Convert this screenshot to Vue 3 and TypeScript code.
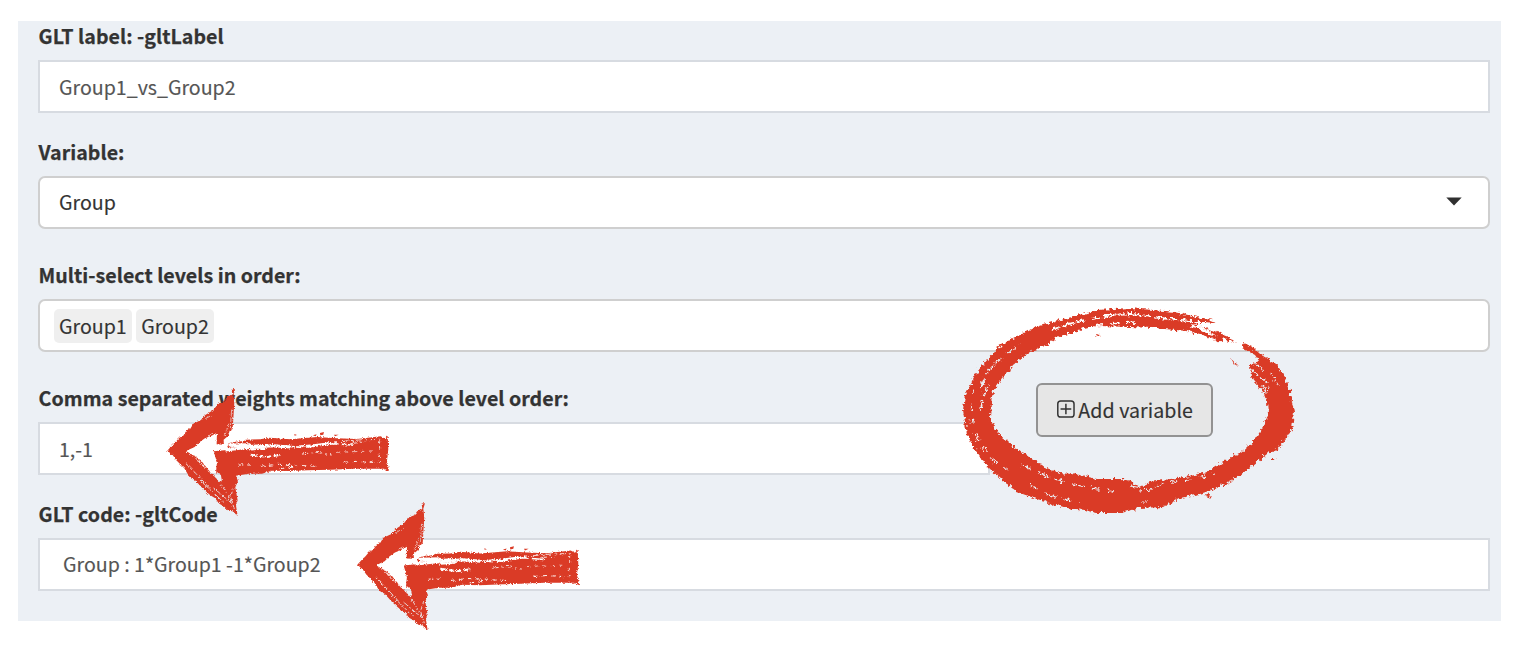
<script setup lang="ts">
import { ref } from 'vue'

const gltLabel = ref('Group1_vs_Group2')
const variable = ref('Group')
const levels = ref<string[]>(['Group1', 'Group2'])
const weights = ref('1,-1')
const gltCode = ref('Group : 1*Group1 -1*Group2')

const arrows = [
  { id: 'weights', at: 'translate(150.3 380.3) scale(.33333)' },
  { id: 'code', at: 'translate(340.3 494.5) scale(.33333)' },
]
</script>

<template>
  <main class="page">
    <section class="panel">
      <div class="field">
        <label class="label">GLT label: -gltLabel</label>
        <div class="control text"><span>{{ gltLabel }}</span></div>
      </div>
      <div class="field select-field">
        <label class="label">Variable:</label>
        <div class="control select">
          <span>{{ variable }}</span>
          <svg class="caret" width="16" height="9" viewBox="0 0 16 9"><path d="M.3.5H15.7L8 8.6Z" fill="#303030" /></svg>
        </div>
      </div>
      <div class="field select-field">
        <label class="label">Multi-select levels in order:</label>
        <div class="control select multi">
          <span v-for="level in levels" :key="level" class="tag"><span>{{ level }}</span></span>
        </div>
      </div>
      <div class="row">
        <div class="field weights">
          <label class="label">Comma separated weights matching above level order:</label>
          <div class="control text"><span>{{ weights }}</span></div>
        </div>
        <button class="add" type="button">
          <svg width="18" height="18" viewBox="0 0 18 18" fill="none" stroke="#333" stroke-width="1.5">
            <rect x=".8" y=".8" width="16.4" height="16.4" rx="3" />
            <path d="M9 3.6V14.4M3.6 9H14.4" />
          </svg>
          <span>Add variable</span>
        </button>
      </div>
      <div class="field">
        <label class="label">GLT code: -gltCode</label>
        <div class="control text code"><span>{{ gltCode }}</span></div>
      </div>
    </section>

    <svg class="marks" width="1514" height="648" viewBox="0 0 1514 648">
      <defs>
        <filter id="rough" x="-10%" y="-10%" width="120%" height="120%">
          <feTurbulence type="fractalNoise" baseFrequency=".5" numOctaves="3" seed="8" />
          <feDisplacementMap in="SourceGraphic" scale="10" xChannelSelector="R" yChannelSelector="G" />
        </filter>
        <filter id="bristle" x="-10%" y="-10%" width="120%" height="120%">
          <feTurbulence type="fractalNoise" baseFrequency=".25 .4" numOctaves="3" seed="4" />
          <feDisplacementMap in="SourceGraphic" scale="11" xChannelSelector="R" yChannelSelector="G" />
        </filter>
        <mask id="arrow-gaps" maskUnits="userSpaceOnUse" x="30" y="0" width="720" height="440">
          <rect x="30" width="720" height="440" fill="#fff" />
          <g filter="url(#bristle)" fill="none" stroke="#000">
            <path stroke-width="9" d="M226 209L275 203L310 201L365 196L420 200M235 194L300 193" />
            <path stroke-width="5" d="M238 200L335 194M300 208L345 205" />
            <path stroke-width="4.5" stroke-dasharray="36 7 55 10" d="M360 194L460 202L550 190L615 195M445 198L490 194L560 185" />
            <path stroke-width="2.5" stroke-dasharray="20 9 6 6" d="M455 221L500 216L545 224M575 184L625 179L688 177M600 190L642 185" />
            <path stroke-width="2" stroke-dasharray="10 14" d="M560 216L670 212" />
            <path stroke-width="6" stroke-dasharray="22 5 14 3" d="M300 223L350 230L390 224" />
            <path stroke-width="3" stroke-dasharray="14 12" d="M265 254H300M330 258L380 252L440 254M455 256L505 258M580 246L620 243L680 247M388 265L440 260" />
            <path stroke-width="2.5" stroke-dasharray="10 10" d="M688 180V205M687 220V248" />
            <path stroke-width="2.5" stroke-dasharray="28 5 17 3" d="M135 232L155 255L175 270L209 305M145 238L163 249M107 250L145 288L180 326M190 323L245 370M213 313L246 366M250 320L241 350L252 386M154 304L220 366" />
            <path stroke-width="2" stroke-dasharray="22 4" d="M165 115L190 102M244 88L240 145M236 130L222 168M172 169L193 155" />
          </g>
        </mask>
        <symbol id="brush-arrow" viewBox="0 0 780 450" overflow="visible">
          <g mask="url(#arrow-gaps)" fill="#da3b26">
            <path filter="url(#rough)" d="M51 211L68 192L75 186L87 172L99 166L109 150L120 145L129 130L152 119L164 105L190 88L203 70L222 62L233 47L246 43L244 27L254 26L249 43L252 67L250 100L247 146L238 151L234 166L220 178L221 193L199 192L200 157L184 166L164 174L147 186L133 200L107 212L129 225L151 239L174 268L209 306L215 302L211 280L197 276L200 246L190 213L238 208L231 199L237 188L255 184L275 183L286 178L329 177L359 172L420 177L500 170L560 174L620 176L691 168L704 175L712 166L714 207L710 241L717 272L701 265L610 265L540 268L471 270L419 272L364 271L335 280L295 280L257 286L263 302L255 321L262 360L257 375L262 407L247 393L234 391L222 379L205 369L195 354L180 345L156 323L133 298L117 289L102 264L78 240L67 224Z" />
            <path d="M432 161L440 164L433 166ZM488 165L499 162L496 168ZM509 158L521 155L519 163L510 165ZM551 163L565 163L554 168Z" />
          </g>
        </symbol>
        <filter id="ring-rough" filterUnits="userSpaceOnUse" x="940" y="290" width="380" height="245">
          <feTurbulence type="fractalNoise" baseFrequency=".3" numOctaves="4" seed="13" />
          <feDisplacementMap in="SourceGraphic" scale="6.5" xChannelSelector="R" yChannelSelector="G" />
        </filter>
        <mask id="ring-gaps" maskUnits="userSpaceOnUse" x="940" y="290" width="380" height="245">
          <rect x="940" y="290" width="380" height="245" fill="#fff" />
          <g filter="url(#ring-rough)" fill="none" stroke="#000">
            <path stroke-width="2.2" stroke-dasharray="8 3 13 2" d="M1052 330L1068 324L1086 320M1092 319L1110 315L1132 314L1160 318L1190 321L1202 324" />
            <path stroke-width="1.3" stroke-dasharray="11 6" d="M1093 326L1110 324L1135 322M1190 326L1212 330L1230 337M994 365Q1006 354 1021 344" />
            <path stroke-width="1.5" stroke-dasharray="11 4" d="M981 388Q985 373 994 365M981 411Q982 394 989 386" />
            <path stroke-width="1" stroke-dasharray="6 9 8 7" d="M974 389Q966 415 982 447M970 419Q974 444 996 464M976 433L988 453M992 459L1008 470" />
            <path stroke-width="1.4" stroke-dasharray="9 8 13 6" d="M1023 465Q1058 485 1114 491M1030 484Q1050 499 1080 502" />
            <path stroke-width="1.2" stroke-dasharray="7 7" d="M1131 486L1150 490L1165 483L1190 480L1214 474M1140 490L1155 488M1141 502H1152" />
            <path stroke-width="1.3" stroke-dasharray="9 3" d="M1255 364L1263 370M1251 369L1266 382L1269 388M1271 373L1278 385M1263 385L1267 396M1263 400L1266 414L1261 430" />
          </g>
        </mask>
      </defs>
      <use v-for="arrow in arrows" :key="arrow.id" href="#brush-arrow" width="780" height="450" :transform="arrow.at" />
      <g fill="#da3b26" mask="url(#ring-gaps)">
        <g filter="url(#ring-rough)">
          <path d="M1215 323L1213 320L1197 317L1175 312L1153 310L1130 308L1097 310L1073 317L1060 320L1033 328L1024 333L1012 339L997 348L988 359L977 372L971 384L965 395L963 410L967 435L974 448L988 467L1002 480L1017 492L1037 499L1067 508L1085 510L1097 513L1120 513L1140 508L1163 507L1180 498L1200 494L1217 488L1235 479L1253 465L1267 454L1277 450L1286 438L1292 430L1294 412L1290 392L1283 373L1275 363L1258 353L1252 347L1243 343L1242 348L1255 355L1259 361L1250 365L1251 377L1263 392L1267 402L1268 413L1264 426L1253 442L1241 452L1230 458L1207 472L1185 477L1163 480L1150 482L1140 487L1132 482L1120 479L1097 479L1080 475L1060 473L1044 467L1030 458L1016 448L1003 438L994 427L990 418L991 402L993 391L1002 378L1009 371L1013 365L1020 359L1030 352L1047 345L1059 336L1073 333L1083 328L1100 326L1130 327L1153 328L1187 331L1208 337L1222 342L1224 338L1207 333L1199 328L1190 326L1200 325L1194 322L1204 322Z" />
          <path d="M1202 327L1224 334L1237 343L1222 339ZM1231 359L1239 366L1233 363ZM1271 457L1276 459L1271 461ZM1208 493L1211 498L1206 496ZM1096 334L1101 335L1097 337ZM1048 502L1054 504L1051 506Z" />
        </g>
      </g>
    </svg>
  </main>
</template>

<style>
body { background: #fff; }
</style>

<style scoped>
.page {
  position: relative;
  box-sizing: border-box;
  width: 1514px;
  height: 648px;
  padding: 21px 13px 27px 18px;
  font-family: "Noto Sans CJK SC", "Open Sans", sans-serif;
  font-size: 19.6px;
  overflow: hidden;
}
.panel {
  box-sizing: border-box;
  height: 600px;
  padding: 1px 11px 0 20px;
  background: #ecf0f5;
}
.field { height: 115.6px; }
.select-field { height: 123.4px; }
.label {
  display: block;
  height: 38px;
  padding-left: .6px;
  line-height: 28px;
  font-weight: 700;
  letter-spacing: .025px;
  -webkit-text-stroke: .25px #333;
  color: #333;
  white-space: nowrap;
}
.control {
  box-sizing: border-box;
  display: flex;
  align-items: center;
  height: 53px;
  padding: 0 19px;
  border: 2px solid #d7dbe1;
  background: #fff;
  color: #555;
  line-height: 30px;
  white-space: pre;
  -webkit-text-stroke: .15px currentColor;
}
.code { padding-left: 23px; }
.select {
  border-color: #cfcfcf;
  border-radius: 7px;
  color: #333;
}
.caret { margin: -1px 7px 0 auto; }
.multi { padding-left: 14px; gap: 4.5px; }
.tag {
  box-sizing: border-box;
  height: 34px;
  margin-top: 1px;
  padding: 2px 5px;
  border-radius: 5px;
  background: #efefef;
}
.row { display: flex; height: 115.6px; }
.weights { width: 952px; }
.add {
  box-sizing: border-box;
  display: flex;
  align-items: center;
  gap: 3.5px;
  width: 177px;
  height: 54px;
  margin: -1px 0 0 46px;
  padding: 0 18px 2px 19px;
  border: 2px solid #929292;
  border-radius: 6px;
  background: #e6e6e6;
  color: #333;
  font: inherit;
  letter-spacing: .06px;
  white-space: nowrap;
  -webkit-text-stroke: .15px currentColor;
}
.marks {
  position: absolute;
  inset: 0;
  pointer-events: none;
}
</style>
